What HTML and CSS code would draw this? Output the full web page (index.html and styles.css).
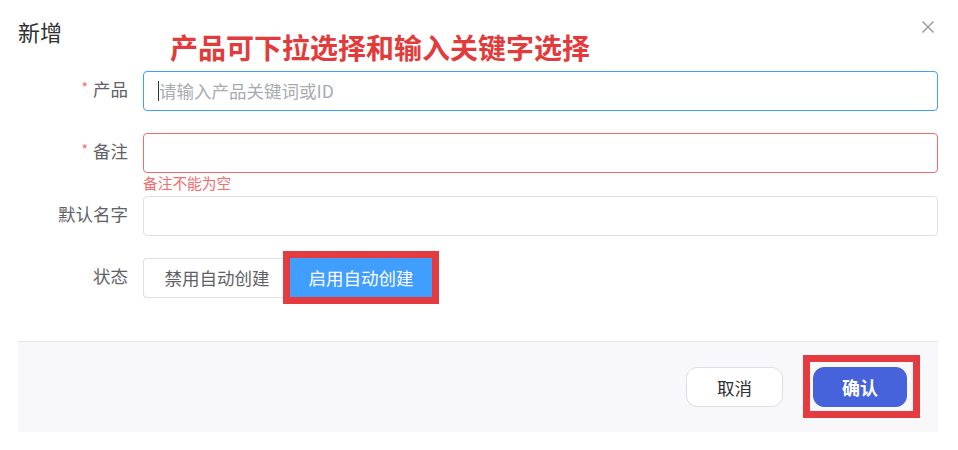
FILE: index.html
```html
<!DOCTYPE html>
<html lang="zh-CN">
<head>
<meta charset="utf-8">
<title>新增</title>
<link rel="stylesheet" href="styles.css">
</head>
<body>
<div class="dialog">
  <div class="dialog-header">
    <span class="dialog-title">新增</span>
    <svg class="close" width="12" height="12" viewBox="0 0 12 12"><path d="M0.5 0.5 L11.5 11.5 M11.5 0.5 L0.5 11.5" stroke="#909399" stroke-width="1.3" fill="none"/></svg>
  </div>
  <div class="note">产品可下拉选择和输入关键字选择</div>
  <div class="form">
    <div class="form-row">
      <label class="form-label"><span class="req">*</span>产品</label>
      <div class="field field-focus"><span class="caret"></span><span class="placeholder">请输入产品关键词或ID</span></div>
    </div>
    <div class="form-row form-row-error">
      <label class="form-label"><span class="req">*</span>备注</label>
      <div class="field field-error"></div>
      <div class="error-text">备注不能为空</div>
    </div>
    <div class="form-row">
      <label class="form-label">默认名字</label>
      <div class="field"></div>
    </div>
    <div class="form-row form-row-last">
      <label class="form-label">状态</label>
      <div class="radio-group">
        <span class="radio-btn radio-off">禁用自动创建</span>
        <span class="radio-btn radio-on">启用自动创建</span>
      </div>
    </div>
  </div>
  <div class="dialog-footer">
    <button class="btn btn-cancel">取消</button>
    <button class="btn btn-ok">确认</button>
  </div>
  <div class="mark mark-status"></div>
  <div class="mark mark-ok"></div>
</div>
</body>
</html>
```
FILE: styles.css
```css
* { box-sizing: border-box; }
html, body { margin: 0; padding: 0; background: #fff; }
body {
  font-family: "Noto Sans CJK SC", "Noto Sans", sans-serif;
  font-size: 17.5px;
  color: #606266;
}
.dialog {
  position: relative;
  width: 958px;
  height: 450px;
  padding: 0 20px 0 18px;
}
.dialog-header {
  display: flex;
  justify-content: space-between;
  align-items: flex-start;
  padding-top: 16px;
  height: 71px;
}
.dialog-title {
  font-size: 22px;
  line-height: 30px;
  color: #303133;
}
.close {
  margin-top: 5px;
  margin-right: 4px;
}
.note {
  position: absolute;
  left: 170px;
  top: 30px;
  font-size: 28px;
  line-height: 34px;
  font-weight: 700;
  color: #e23b3b;
  white-space: nowrap;
}
.form-row {
  display: grid;
  grid-template-columns: 125px 1fr;
  grid-auto-rows: auto;
  margin-bottom: 22px;
}
.form-row-error { margin-bottom: 0; }
.form-row-last { margin-bottom: 0; }
.form-label {
  height: 40px;
  text-align: right;
  padding-right: 15px;
  line-height: 36px;
  color: #606266;
  overflow: hidden;
}
.req {
  color: #f56c6c;
  margin-right: 5px;
  font-size: 14px;
  vertical-align: top;
  line-height: 32px;
}
.field {
  height: 40px;
  border: 1px solid #dcdfe6;
  border-radius: 4px;
  display: flex;
  align-items: center;
  padding-left: 14px;
  overflow: hidden;
}
.field-focus { border-color: #409eff; }
.field-error { border-color: #f56c6c; }
.caret {
  width: 1px;
  height: 20px;
  background: #303133;
}
.placeholder {
  color: #a8abb2;
  line-height: 20px;
}
.error-text {
  grid-column: 2;
  height: 23px;
  line-height: 20px;
  font-size: 14.7px;
  color: #f56c6c;
  overflow: hidden;
}
.radio-group { display: flex; height: 40px; }
.radio-btn {
  height: 40px;
  line-height: 38px;
  text-align: center;
  border: 1px solid #dcdfe6;
}
.radio-off {
  width: 147px;
  color: #606266;
  background: #fff;
  border-radius: 4px 0 0 4px;
  border-right: none;
}
.radio-on {
  width: 142px;
  color: #fff;
  background: #409eff;
  border-color: #409eff;
  height: 39px;
}
.dialog-footer {
  margin-top: 43px;
  height: 91px;
  background: #f8f8fa;
  border-top: 1px solid #e6e6e9;
  display: flex;
  justify-content: flex-end;
  align-items: center;
  gap: 30px;
  padding-right: 31px;
}
.btn {
  font-family: inherit;
  font-size: 17.5px;
  height: 40px;
  border-radius: 11px;
  padding: 0;
  cursor: pointer;
}
.btn-cancel {
  width: 97px;
  background: #fff;
  border: 1px solid #dcdfe6;
  color: #303133;
}
.btn-ok {
  width: 94px;
  background: #4763dc;
  border: 1px solid #4763dc;
  color: #fff;
  font-weight: 700;
  font-size: 18px;
}
.mark {
  position: absolute;
  border: 7px solid #e33b3f;
}
.mark-status {
  left: 283px;
  top: 251px;
  width: 156px;
  height: 53px;
}
.mark-ok {
  left: 803px;
  top: 355px;
  width: 117px;
  height: 63px;
}
```
